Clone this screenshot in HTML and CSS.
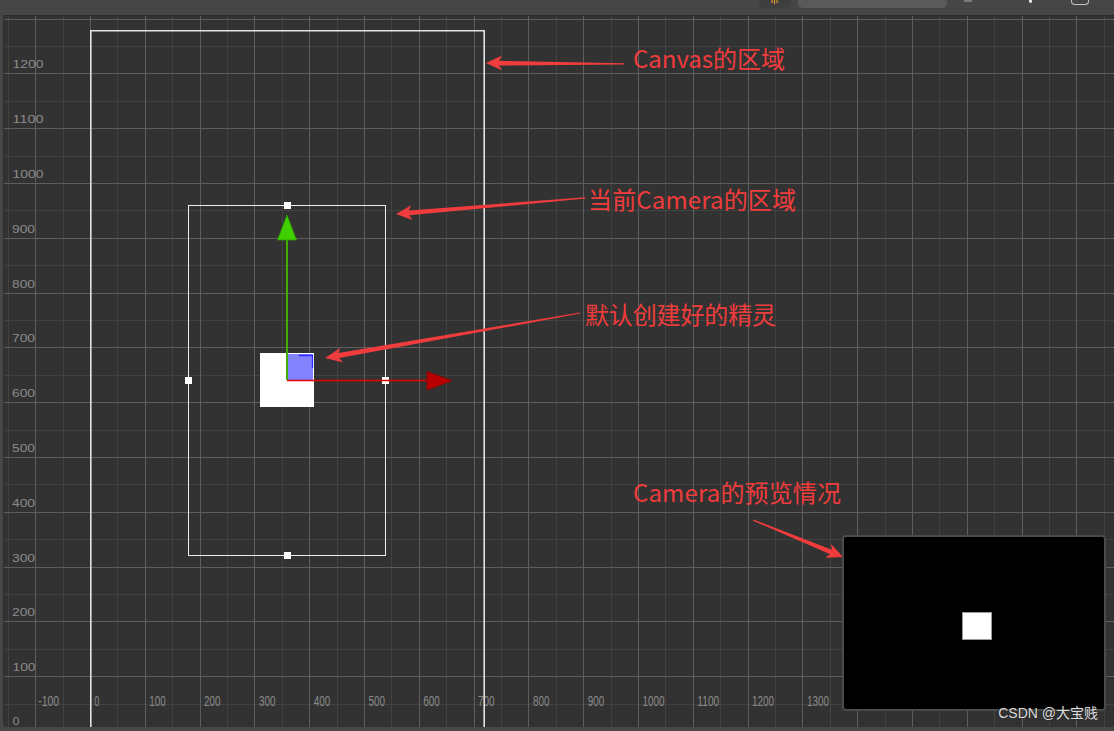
FILE: index.html
```html
<!DOCTYPE html>
<html lang="zh">
<head>
<meta charset="utf-8">
<title>Scene</title>
<link rel="stylesheet" href="styles.css">
</head>
<body>
<div class="toolbar">
  <div class="tb-btn">
    <svg class="tb-btn-icon" width="8" height="4" viewBox="0 0 8 4"><path d="M1 0v3M3.5 0v4M6 0v3" stroke="#e0962a" stroke-width="1.2"/></svg>
  </div>
  <div class="tb-search"></div>
  <div class="tb-icon"></div>
  <div class="tb-dot"></div>
  <div class="tb-box"></div>
</div>
<div class="viewport">
  <svg class="scene" width="1110" height="711" viewBox="4 16 1110 711">
    <g class="grid-minor">
      <path d="M8.5 16V727M63.5 16V727M117.5 16V727M172.5 16V727M227.5 16V727M282.5 16V727M337.5 16V727M391.5 16V727M446.5 16V727M501.5 16V727M556.5 16V727M611.5 16V727M665.5 16V727M720.5 16V727M775.5 16V727M830.5 16V727M885.5 16V727M939.5 16V727M994.5 16V727M1049.5 16V727M1104.5 16V727"/>
      <path d="M4 704.5H1114M4 649.5H1114M4 594.5H1114M4 539.5H1114M4 484.5H1114M4 430.5H1114M4 375.5H1114M4 320.5H1114M4 265.5H1114M4 210.5H1114M4 156.5H1114M4 101.5H1114M4 46.5H1114"/>
    </g>
    <g class="grid-major">
      <path d="M35.5 16V727M90.5 16V727M145.5 16V727M200.5 16V727M254.5 16V727M309.5 16V727M364.5 16V727M419.5 16V727M474.5 16V727M528.5 16V727M583.5 16V727M638.5 16V727M693.5 16V727M748.5 16V727M802.5 16V727M857.5 16V727M912.5 16V727M967.5 16V727M1022.5 16V727M1076.5 16V727"/>
      <path d="M4 676.5H1114M4 621.5H1114M4 567.5H1114M4 512.5H1114M4 457.5H1114M4 402.5H1114M4 347.5H1114M4 293.5H1114M4 238.5H1114M4 183.5H1114M4 128.5H1114M4 73.5H1114M4 19.5H1114"/>
    </g>

    <g class="axis-y">
      <text x="12.5" y="68.4" textLength="31" lengthAdjust="spacingAndGlyphs">1200</text>
      <text x="12.5" y="123.2" textLength="31" lengthAdjust="spacingAndGlyphs">1100</text>
      <text x="12.5" y="178" textLength="31" lengthAdjust="spacingAndGlyphs">1000</text>
      <text x="12" y="232.8" textLength="23" lengthAdjust="spacingAndGlyphs">900</text>
      <text x="12" y="287.6" textLength="23" lengthAdjust="spacingAndGlyphs">800</text>
      <text x="12" y="342.4" textLength="23" lengthAdjust="spacingAndGlyphs">700</text>
      <text x="12" y="397.2" textLength="23" lengthAdjust="spacingAndGlyphs">600</text>
      <text x="12" y="452" textLength="23" lengthAdjust="spacingAndGlyphs">500</text>
      <text x="12" y="506.8" textLength="23" lengthAdjust="spacingAndGlyphs">400</text>
      <text x="12" y="561.6" textLength="23" lengthAdjust="spacingAndGlyphs">300</text>
      <text x="12" y="616.4" textLength="23" lengthAdjust="spacingAndGlyphs">200</text>
      <text x="12.5" y="671.2" textLength="23" lengthAdjust="spacingAndGlyphs">100</text>
      <text x="12.5" y="724.5" textLength="7" lengthAdjust="spacingAndGlyphs">0</text>
    </g>
    <g class="axis-x">
      <text x="38.2" y="705.5" textLength="21" lengthAdjust="spacingAndGlyphs">-100</text>
      <text x="94.3" y="705.5" textLength="5" lengthAdjust="spacingAndGlyphs">0</text>
      <text x="149.3" y="705.5" textLength="16.5" lengthAdjust="spacingAndGlyphs">100</text>
      <text x="204.1" y="705.5" textLength="16.5" lengthAdjust="spacingAndGlyphs">200</text>
      <text x="258.9" y="705.5" textLength="16.5" lengthAdjust="spacingAndGlyphs">300</text>
      <text x="313.7" y="705.5" textLength="16.5" lengthAdjust="spacingAndGlyphs">400</text>
      <text x="368.5" y="705.5" textLength="16.5" lengthAdjust="spacingAndGlyphs">500</text>
      <text x="423.3" y="705.5" textLength="16.5" lengthAdjust="spacingAndGlyphs">600</text>
      <text x="478.1" y="705.5" textLength="16.5" lengthAdjust="spacingAndGlyphs">700</text>
      <text x="532.9" y="705.5" textLength="16.5" lengthAdjust="spacingAndGlyphs">800</text>
      <text x="587.7" y="705.5" textLength="16.5" lengthAdjust="spacingAndGlyphs">900</text>
      <text x="642.5" y="705.5" textLength="22" lengthAdjust="spacingAndGlyphs">1000</text>
      <text x="697.3" y="705.5" textLength="22" lengthAdjust="spacingAndGlyphs">1100</text>
      <text x="752.1" y="705.5" textLength="22" lengthAdjust="spacingAndGlyphs">1200</text>
      <text x="806.9" y="705.5" textLength="22" lengthAdjust="spacingAndGlyphs">1300</text>
    </g>

    <!-- Canvas bounds -->
    <path class="canvas-frame" d="M90.8 731V30.8H484.2V731"/>
    <!-- Camera bounds -->
    <rect class="camera-frame" x="188.5" y="205.5" width="197" height="350"/>
    <g class="handles">
      <rect x="284" y="202" width="7" height="7"/>
      <rect x="284" y="552" width="7" height="7"/>
      <rect x="185" y="377" width="7" height="7"/>
      <rect x="382" y="377" width="7" height="7"/>
    </g>

    <!-- Sprite -->
    <rect class="sprite" x="260" y="353" width="54" height="54"/>
    <rect class="sprite-rect-tool" x="287" y="354" width="26" height="26"/>
    <path class="sprite-corner" d="M299 355.5H312.5V368"/>

    <!-- Gizmo -->
    <line class="axis-y-line" x1="287" y1="380" x2="287" y2="239"/>
    <polygon class="axis-y-head" points="287,215 277.5,240 296.5,240"/>
    <line class="axis-x-line" x1="287" y1="380.5" x2="429" y2="380.5"/>
    <polygon class="axis-x-head" points="427,371.5 452,380.7 427,390"/>

    <!-- Annotations -->
    <g class="note-arrow">
      <polygon transform="translate(486 63) rotate(0.4)" points="0,0 16,-7.5 13,-2.4 138,-0.6 138,0.6 13,2.4 16,7.5"/>
      <polygon transform="translate(396 214) rotate(-4.84)" points="0,0 16,-7.5 13,-2.4 190,-0.6 190,0.6 13,2.4 16,7.5"/>
      <polygon transform="translate(325 358) rotate(-10)" points="0,0 17,-7.5 14,-2.5 259,-0.6 259,0.6 14,2.5 17,7.5"/>
      <polygon transform="translate(843 557) rotate(-157.65)" points="0,0 16,-7.5 13,-2.4 97,-0.6 97,0.6 13,2.4 16,7.5"/>
    </g>
    <g class="note">
      <text x="633" y="67.5" textLength="152">Canvas的区域</text>
      <text x="588" y="208.5" textLength="208">当前Camera的区域</text>
      <text x="585" y="324" textLength="191">默认创建好的精灵</text>
      <text x="633" y="502" textLength="208">Camera的预览情况</text>
    </g>
  </svg>

  <div class="preview">
    <div class="preview-sprite"></div>
  </div>
  <div class="watermark">CSDN @大宝贱</div>
</div>
</body>
</html>
```

FILE: styles.css
```css
* {
  box-sizing: border-box;
}

html, body {
  margin: 0;
  padding: 0;
}

body {
  width: 1114px;
  height: 731px;
  overflow: hidden;
  background: #474747;
  display: flex;
  flex-direction: column;
  font-family: "Liberation Sans", Arial, sans-serif;
}

/* ---------- top toolbar (cut off) ---------- */
.toolbar {
  height: 15px;
  flex: none;
  display: flex;
  justify-content: flex-end;
  align-items: flex-start;
  padding-right: 25px;
  background: #464646;
}

.tb-btn {
  width: 32px;
  height: 8px;
  background: #3f3f3f;
  border-radius: 0 0 5px 5px;
  display: flex;
  justify-content: center;
  align-items: flex-start;
}

.tb-btn-icon {
  display: block;
}

.tb-search {
  width: 149px;
  height: 8px;
  margin-left: 7px;
  background: #5a5a5a;
  border-radius: 0 0 5px 5px;
}

.tb-icon {
  width: 8px;
  height: 2px;
  margin-left: 17px;
  background: #7a7a7a;
}

.tb-dot {
  width: 3px;
  height: 3px;
  margin-left: 57px;
  background: #e0e0e0;
  border-radius: 0 0 2px 2px;
}

.tb-box {
  width: 18px;
  height: 5px;
  margin-left: 39px;
  border: 1.5px solid #c4c4c4;
  border-top: none;
  border-radius: 0 0 4px 4px;
}

/* ---------- scene viewport ---------- */
.viewport {
  position: relative;
  flex: none;
  height: 712px;
  margin-left: 3px;
  border-top: 1px solid #2b2b2b;
  border-left: 1px solid #2e2e2e;
  background: #323232;
  border-bottom-left-radius: 4px;
  overflow: hidden;
}

.scene {
  display: block;
}

.grid-minor {
  stroke: #424242;
  stroke-width: 1;
  fill: none;
}

.grid-major {
  stroke: #5e5e5e;
  stroke-width: 1;
  fill: none;
}

.axis-y text {
  font-family: "Liberation Sans", Arial, sans-serif;
  font-size: 10px;
  fill: #8b8b8b;
}

.axis-x text {
  font-family: "Liberation Sans", Arial, sans-serif;
  font-size: 14px;
  fill: #8b8b8b;
}

.canvas-frame {
  fill: none;
  stroke: #e2e2e2;
  stroke-width: 1.6;
}

.camera-frame {
  fill: none;
  stroke: #ececec;
  stroke-width: 1;
}

.handles rect {
  fill: #ffffff;
}

.sprite {
  fill: #ffffff;
}

.sprite-rect-tool {
  fill: #8282ff;
}

.sprite-corner {
  fill: none;
  stroke: #2a2aff;
  stroke-width: 1.3;
}

.axis-y-line {
  stroke: #41ad00;
  stroke-width: 2;
}

.axis-y-head {
  fill: #3fd000;
  stroke: #2e9a00;
  stroke-width: 0.8;
}

.axis-x-line {
  stroke: #e40000;
  stroke-width: 1.6;
}

.axis-x-head {
  fill: #b80000;
  stroke: #8e0000;
  stroke-width: 0.8;
}

.note-arrow polygon {
  fill: #f03c3c;
}

.note text {
  font-family: "Noto Sans CJK SC", "Noto Sans", sans-serif;
  font-size: 24px;
  fill: #f03c3c;
}

/* ---------- camera preview ---------- */
.preview {
  position: absolute;
  right: 8px;
  bottom: 16px;
  width: 264px;
  height: 176px;
  background: #000000;
  border: 2px solid #4b4b4b;
  border-radius: 4px;
  display: flex;
  align-items: center;
  justify-content: center;
}

.preview-sprite {
  width: 30px;
  height: 28px;
  margin: 6px 0 0 6px;
  background: #ffffff;
  border: 1px solid #9a9a9a;
}

.watermark {
  position: absolute;
  right: 16px;
  bottom: 6px;
  font-family: "Liberation Sans", Arial, "Noto Sans CJK SC", sans-serif;
  font-size: 14px;
  line-height: 16px;
  color: #dcdcdc;
  text-shadow: 0 0 2px #222, 0 0 1px #222;
  white-space: nowrap;
}
```
